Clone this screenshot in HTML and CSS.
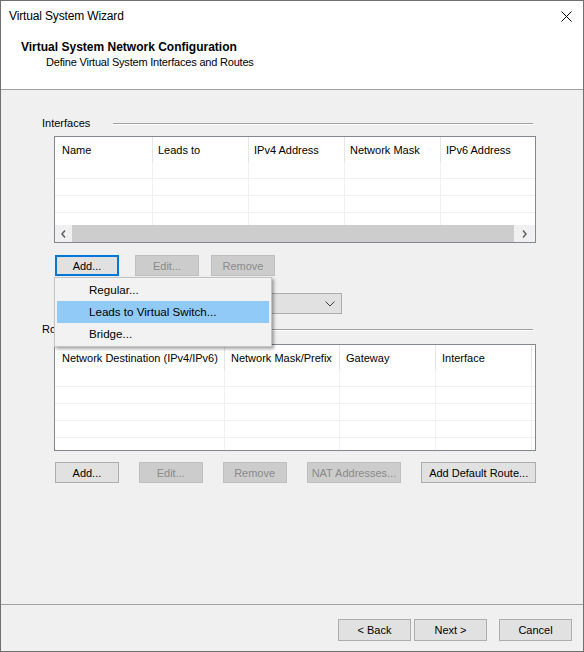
FILE: index.html
```html
<!DOCTYPE html>
<html>
<head>
<meta charset="utf-8">
<link rel="stylesheet" href="styles.css">
</head>
<body>
<div class="window">
  <div class="titlebar">
    <span class="title">Virtual System Wizard</span>
    <svg class="close" width="11" height="11" viewBox="0 0 11 11"><path d="M0.5 0.5 L10.5 10.5 M10.5 0.5 L0.5 10.5" stroke="#000" stroke-width="1" fill="none"/></svg>
  </div>
  <div class="header">
    <div class="h-title">Virtual System Network Configuration</div>
    <div class="h-sub">Define Virtual System Interfaces and Routes</div>
  </div>
  <div class="content">
    <div class="group-head first"><span class="g-label">Interfaces</span><span class="g-line"></span></div>
    <div class="list list-if">
      <div class="grid grid-if">
        <div class="hc">Name</div><div class="hc">Leads to</div><div class="hc">IPv4 Address</div><div class="hc">Network Mask</div><div class="hc last">IPv6 Address</div>
        <div class="dc"></div><div class="dc"></div><div class="dc"></div><div class="dc"></div><div class="dc"></div>
        <div class="dc"></div><div class="dc"></div><div class="dc"></div><div class="dc"></div><div class="dc"></div>
        <div class="dc"></div><div class="dc"></div><div class="dc"></div><div class="dc"></div><div class="dc"></div>
        <div class="dc"></div><div class="dc"></div><div class="dc"></div><div class="dc"></div><div class="dc"></div>
      </div>
      <div class="hscroll">
        <div class="arrow"><svg width="5" height="8" viewBox="0 0 5 8"><path d="M4 0.5 L1 4 L4 7.5" stroke="#606060" stroke-width="1.5" fill="none"/></svg></div>
        <div class="thumb"></div>
        <div class="arrow"><svg width="5" height="8" viewBox="0 0 5 8"><path d="M1 0.5 L4 4 L1 7.5" stroke="#606060" stroke-width="1.5" fill="none"/></svg></div>
      </div>
    </div>
    <div class="btn-row row-if">
      <button class="btn focus w64">Add...</button>
      <button class="btn dis w64 ml16">Edit...</button>
      <button class="btn dis w64 ml12">Remove</button>
    </div>
    <div class="combo-row">
      <div class="combo">
        <svg width="10" height="6" viewBox="0 0 10 6"><path d="M0.5 0.5 L5 5 L9.5 0.5" stroke="#404040" stroke-width="1" fill="none"/></svg>
      </div>
    </div>
    <div class="group-head second"><span class="g-label">Routes</span><span class="g-line"></span></div>
    <div class="list list-rt">
      <div class="grid grid-rt">
        <div class="hc">Network Destination (IPv4/IPv6)</div><div class="hc">Network Mask/Prefix</div><div class="hc">Gateway</div><div class="hc">Interface</div><div class="hc last"></div>
        <div class="dc"></div><div class="dc"></div><div class="dc"></div><div class="dc"></div><div class="dc"></div>
        <div class="dc"></div><div class="dc"></div><div class="dc"></div><div class="dc"></div><div class="dc"></div>
        <div class="dc"></div><div class="dc"></div><div class="dc"></div><div class="dc"></div><div class="dc"></div>
        <div class="dc"></div><div class="dc"></div><div class="dc"></div><div class="dc"></div><div class="dc"></div>
        <div class="dc"></div><div class="dc"></div><div class="dc"></div><div class="dc"></div><div class="dc"></div>
      </div>
    </div>
    <div class="btn-row row-rt">
      <button class="btn w64">Add...</button>
      <button class="btn dis w64 ml20">Edit...</button>
      <button class="btn dis w64 ml20">Remove</button>
      <button class="btn dis w95 ml20">NAT Addresses...</button>
      <button class="btn w115 ml20">Add Default Route...</button>
    </div>
  </div>
  <div class="footer">
    <button class="btn wiz">&lt; Back</button>
    <button class="btn wiz ml3">Next &gt;</button>
    <button class="btn wiz ml12">Cancel</button>
  </div>
  <div class="menu">
    <div class="mi">Regular...</div>
    <div class="mi hot">Leads to Virtual Switch...</div>
    <div class="mi">Bridge...</div>
  </div>
</div>
</body>
</html>
```
FILE: styles.css
```css
html, body {
  margin: 0;
  padding: 0;
  background: #f0f0f0;
}
body {
  width: 584px;
  height: 652px;
  overflow: hidden;
  font-family: "Liberation Sans", Arial, sans-serif;
  font-size: 11px;
  color: #000;
}
.window {
  position: relative;
  box-sizing: border-box;
  width: 584px;
  height: 652px;
  border: 1px solid #707070;
  background: #f0f0f0;
  display: flex;
  flex-direction: column;
}
.titlebar {
  height: 29px;
  background: #fff;
  display: flex;
  align-items: center;
  justify-content: space-between;
  padding: 0 11px 0 8px;
  flex: none;
}
.title {
  font-size: 12px;
  line-height: 16px;
  letter-spacing: -0.15px;
}
.close {
  display: block;
  margin-top: 1px;
}
.header {
  box-sizing: border-box;
  height: 60px;
  background: #fff;
  border-bottom: 1px solid #a0a0a0;
  padding: 10px 0 0 20px;
  flex: none;
}
.h-title {
  font-weight: bold;
  font-size: 12px;
  line-height: 14px;
}
.h-sub {
  line-height: 13px;
  margin: 2px 0 0 25px;
  letter-spacing: -0.2px;
}
.content {
  flex: 1;
  padding: 0 47px 0 53px;
}
.group-head {
  display: flex;
  align-items: center;
  height: 13px;
  margin-left: -12px;
  margin-right: 3px;
  line-height: 13px;
}
.group-head.first { margin-top: 27px; }
.group-head.second { margin-top: 9px; }
.g-label {
  width: 71px;
  flex: none;
  white-space: nowrap;
}
.g-line {
  flex: 1;
  height: 0;
  border-top: 1px solid #a0a0a0;
  border-bottom: 1px solid #fff;
}
.list {
  box-sizing: border-box;
  height: 107px;
  border: 1px solid #828790;
  background: #fff;
  overflow: hidden;
  display: flex;
  flex-direction: column;
}
.list-if { margin-top: 6px; }
.list-rt { margin-top: 8px; }
.grid {
  display: grid;
  grid-template-rows: 25px;
  grid-auto-rows: 17px;
  flex: 1;
  overflow: hidden;
}
.grid-if { grid-template-columns: 98px 96px 96px 96px 120px; }
.grid-rt { grid-template-columns: 170px 115px 96px 96px 30px; }
.hc {
  box-sizing: border-box;
  border-right: 1px solid #e5e5e5;
  padding: 1px 0 0 6px;
  white-space: nowrap;
  overflow: hidden;
  line-height: 25px;
  height: 25px;
}
.grid-if .hc { padding-left: 5px; }
.grid .hc:first-child { padding-left: 7px; }
.hc.last { border-right: none; }
.dc {
  box-sizing: border-box;
  border-right: 1px solid #f0f0f0;
  border-bottom: 1px solid #f0f0f0;
}
.hscroll {
  flex: none;
  height: 17px;
  background: #f0f0f0;
  display: flex;
  align-items: center;
}
.arrow {
  width: 17px;
  height: 17px;
  display: flex;
  align-items: center;
  justify-content: center;
  flex: none;
}
.arrow:last-child { width: 21px; }
.thumb {
  height: 17px;
  width: 442px;
  background: #cdcdcd;
}
.btn-row {
  display: flex;
  padding-left: 1px;
}
.row-if { margin-top: 12px; }
.row-rt { margin-top: 11px; }
.btn {
  box-sizing: border-box;
  height: 21px;
  margin: 0;
  padding: 0;
  font-family: "Liberation Sans", Arial, sans-serif;
  font-size: 11px;
  color: #000;
  background: #e1e1e1;
  border: 1px solid #adadad;
  border-radius: 0;
  text-align: center;
  white-space: nowrap;
}
.btn.focus { border: 2px solid #0078d7; }
.btn.dis {
  background: #cccccc;
  border-color: #bfbfbf;
  color: #8a8a8a;
}
.w64 { width: 64px; }
.w95 { width: 95px; }
.w115 { width: 115px; }
.ml3 { margin-left: 3px; }
.ml12 { margin-left: 12px; }
.ml16 { margin-left: 16px; }
.ml20 { margin-left: 20px; }
.combo-row {
  margin-top: 17px;
  display: flex;
  padding-left: 100px;
}
.combo {
  box-sizing: border-box;
  width: 188px;
  height: 21px;
  background: #e1e1e1;
  border: 1px solid #adadad;
  display: flex;
  align-items: center;
  justify-content: flex-end;
  padding-right: 6px;
}
.combo svg { display: block; }
.footer {
  flex: none;
  box-sizing: border-box;
  height: 47px;
  border-top: 1px solid #a0a0a0;
  padding: 14px 11px 0 0;
  display: flex;
  justify-content: flex-end;
  align-items: flex-start;
}
.btn.wiz {
  width: 73px;
  height: 22px;
}
.menu {
  position: absolute;
  left: 53px;
  top: 276px;
  box-sizing: border-box;
  width: 218px;
  height: 70px;
  background: #f2f2f2;
  border: 1px solid #c4c4c4;
  padding: 1px 2px;
  box-shadow: 2px 2px 3px rgba(0,0,0,0.35);
}
.mi {
  height: 22px;
  line-height: 22px;
  padding-left: 32px;
  font-size: 11.6px;
  white-space: nowrap;
}
.mi.hot { background: #91c9f7; }
```
